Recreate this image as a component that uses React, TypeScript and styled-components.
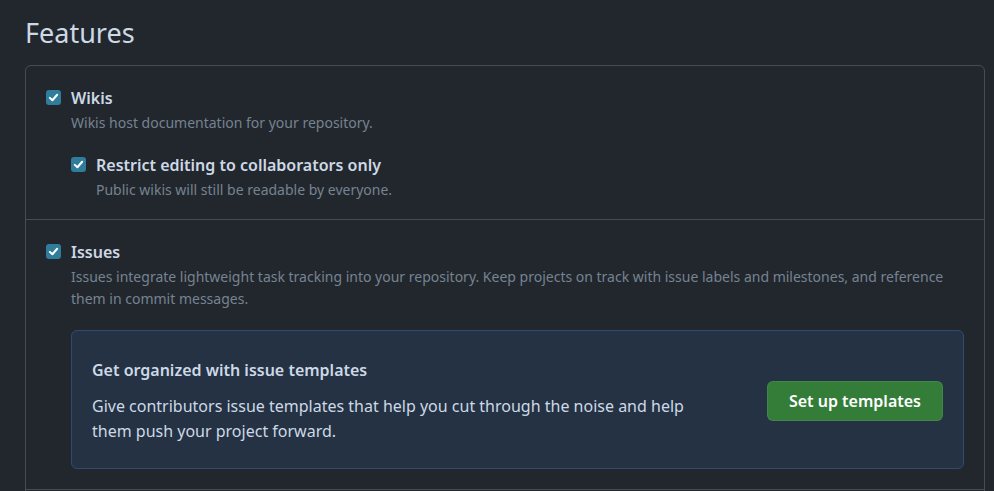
import styled, { createGlobalStyle } from 'styled-components';

const GlobalStyle = createGlobalStyle`
  html, body {
    margin: 0;
    padding: 0;
    background: #22272e;
  }
  body {
    font-family: "Noto Sans", "Open Sans", sans-serif;
    color: #adbac7;
  }
`;

const Page = styled.main`
  padding: 14px 9px 0 25px;
  height: 491px;
  box-sizing: border-box;
  overflow: hidden;
`;

const Heading = styled.h2`
  margin: 0 0 13px;
  font-size: 27px;
  font-weight: 400;
  line-height: 38px;
  color: #cdd9e5;
`;

const Box = styled.section`
  border: 1px solid #444c56;
  border-radius: 6px;
`;

const Row = styled.div`
  padding: 21px 20px 18px;
  & + & {
    border-top: 1px solid #444c56;
  }
`;

const Option = styled.label<{ $nested?: boolean }>`
  display: grid;
  grid-template-columns: 16px 1fr;
  column-gap: 9px;
  margin-top: ${({ $nested }) => ($nested ? '20px' : '0')};
  margin-left: ${({ $nested }) => ($nested ? '25px' : '0')};
`;

const Check = styled.span`
  width: 15px;
  height: 15px;
  margin-top: 3px;
  border-radius: 3px;
  background: #2f7d9b;
  display: flex;
  align-items: center;
  justify-content: center;
`;

const Title = styled.span`
  font-size: 16px;
  font-weight: 600;
  line-height: 22px;
  color: #cdd9e5;
`;

const Note = styled.p`
  grid-column: 2;
  margin: 3px 0 0;
  font-size: 14px;
  line-height: 22px;
  color: #768390;
`;

const Promo = styled.div`
  margin: 20px 0 2px 25px;
  padding: 28px 20px 24px 20px;
  background: #243244;
  border: 1px solid #2f4b73;
  border-radius: 6px;
  display: flex;
  align-items: center;
  justify-content: space-between;
  gap: 24px;
`;

const PromoText = styled.div`
  max-width: 615px;
`;

const PromoTitle = styled.h3`
  margin: 0 0 13px;
  font-size: 16px;
  font-weight: 600;
  line-height: 22px;
  color: #cdd9e5;
`;

const PromoBody = styled.p`
  margin: 0;
  font-size: 16px;
  line-height: 25px;
  color: #cdd9e5;
`;

const Button = styled.button`
  font-family: inherit;
  font-size: 16px;
  font-weight: 600;
  color: #ffffff;
  background: #347d39;
  border: 1px solid rgba(205, 217, 229, 0.1);
  border-radius: 6px;
  padding: 0 21px;
  height: 40px;
  margin-bottom: 2px;
  white-space: nowrap;
  cursor: pointer;
`;

const Tick = () => (
  <svg width="11" height="11" viewBox="0 0 12 12">
    <path d="M2 6.4 4.8 9 10 3" fill="none" stroke="#fff" strokeWidth="2.2" strokeLinecap="round" strokeLinejoin="round" />
  </svg>
);

export default function App() {
  return (
    <>
      <GlobalStyle />
      <Page>
        <Heading>Features</Heading>
        <Box>
          <Row>
            <Option>
              <Check><Tick /></Check>
              <Title>Wikis</Title>
              <Note>Wikis host documentation for your repository.</Note>
            </Option>
            <Option $nested>
              <Check><Tick /></Check>
              <Title>Restrict editing to collaborators only</Title>
              <Note>Public wikis will still be readable by everyone.</Note>
            </Option>
          </Row>
          <Row>
            <Option>
              <Check><Tick /></Check>
              <Title>Issues</Title>
              <Note>
                Issues integrate lightweight task tracking into your repository. Keep projects on track with issue labels and milestones, and reference them in commit messages.
              </Note>
            </Option>
            <Promo>
              <PromoText>
                <PromoTitle>Get organized with issue templates</PromoTitle>
                <PromoBody>
                  Give contributors issue templates that help you cut through the noise and help them push your project forward.
                </PromoBody>
              </PromoText>
              <Button>Set up templates</Button>
            </Promo>
          </Row>
          <Row aria-hidden />
        </Box>
      </Page>
    </>
  );
}
